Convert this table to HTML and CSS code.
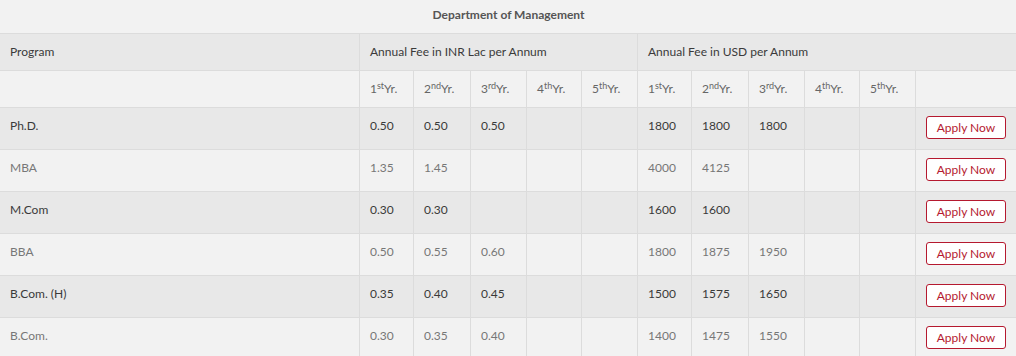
FILE: index.html
```html
<!DOCTYPE html>
<html>
<head>
<meta charset="utf-8">
<link rel="stylesheet" href="styles.css">
</head>
<body>
<table class="fees">
  <colgroup>
    <col class="c-prog">
    <col class="c54"><col class="c57"><col class="c56"><col class="c55"><col class="c56">
    <col class="c54"><col class="c57"><col class="c56"><col class="c55"><col class="c56">
    <col class="c-apply">
  </colgroup>
  <thead>
    <tr class="r-title"><th colspan="12" class="title">Department of Management</th></tr>
    <tr class="r-head">
      <th class="prog">Program</th>
      <th colspan="5">Annual Fee in INR Lac per Annum</th>
      <th colspan="6">Annual Fee in USD per Annum</th>
    </tr>
    <tr class="r-years">
      <th></th>
      <th>1<sup>st</sup>Yr.</th><th>2<sup>nd</sup>Yr.</th><th>3<sup>rd</sup>Yr.</th><th>4<sup>th</sup>Yr.</th><th>5<sup>th</sup>Yr.</th>
      <th>1<sup>st</sup>Yr.</th><th>2<sup>nd</sup>Yr.</th><th>3<sup>rd</sup>Yr.</th><th>4<sup>th</sup>Yr.</th><th>5<sup>th</sup>Yr.</th>
      <th></th>
    </tr>
  </thead>
  <tbody>
    <tr class="dark">
      <td>Ph.D.</td><td>0.50</td><td>0.50</td><td>0.50</td><td></td><td></td>
      <td>1800</td><td>1800</td><td>1800</td><td></td><td></td>
      <td class="act"><a class="apply">Apply Now</a></td>
    </tr>
    <tr class="light">
      <td>MBA</td><td>1.35</td><td>1.45</td><td></td><td></td><td></td>
      <td>4000</td><td>4125</td><td></td><td></td><td></td>
      <td class="act"><a class="apply">Apply Now</a></td>
    </tr>
    <tr class="dark">
      <td>M.Com</td><td>0.30</td><td>0.30</td><td></td><td></td><td></td>
      <td>1600</td><td>1600</td><td></td><td></td><td></td>
      <td class="act"><a class="apply">Apply Now</a></td>
    </tr>
    <tr class="light">
      <td>BBA</td><td>0.50</td><td>0.55</td><td>0.60</td><td></td><td></td>
      <td>1800</td><td>1875</td><td>1950</td><td></td><td></td>
      <td class="act"><a class="apply">Apply Now</a></td>
    </tr>
    <tr class="dark">
      <td>B.Com. (H)</td><td>0.35</td><td>0.40</td><td>0.45</td><td></td><td></td>
      <td>1500</td><td>1575</td><td>1650</td><td></td><td></td>
      <td class="act"><a class="apply">Apply Now</a></td>
    </tr>
    <tr class="light">
      <td>B.Com.</td><td>0.30</td><td>0.35</td><td>0.40</td><td></td><td></td>
      <td>1400</td><td>1475</td><td>1550</td><td></td><td></td>
      <td class="act"><a class="apply">Apply Now</a></td>
    </tr>
  </tbody>
</table>
</body>
</html>
```

FILE: styles.css
```css
html, body {
  margin: 0;
  padding: 0;
  background: #f2f2f2;
  overflow: hidden;
}

.fees {
  font-family: Lato, "Open Sans", sans-serif;
  font-size: 12px;
  line-height: 17px;
  border-collapse: collapse;
  table-layout: fixed;
  width: 1018px;
  margin: -1px 0 0 -1px;
}

.c-prog { width: 360px; }
.c54 { width: 54px; }
.c55 { width: 55px; }
.c56 { width: 56px; }
.c57 { width: 57px; }
.c-apply { width: 102px; }

.fees th,
.fees td {
  border: 1px solid #dcdcdc;
  padding: 9px 10px 0;
  text-align: left;
  vertical-align: top;
  font-weight: 400;
  white-space: nowrap;
}

.r-title th {
  padding-top: 6px;
  height: 27px;
  text-align: center;
  font-weight: 700;
  color: #555;
  background: #f2f2f2;
}

.r-head th {
  height: 27px;
  color: #3a3a3a;
  background: #e8e8e8;
}

.r-years th {
  height: 27px;
  color: #666;
  background: #f2f2f2;
}

.fees sup {
  font-size: 9px;
  line-height: 0;
  vertical-align: 4px;
}

.fees tbody td {
  height: 32px;
}

.dark td {
  background: #e8e8e8;
  color: #3a3a3a;
}

.light td {
  background: #f2f2f2;
  color: #777;
}

.fees td.act {
  padding-top: 8px;
  padding-left: 10px;
}

.apply {
  display: inline-block;
  box-sizing: border-box;
  width: 80px;
  height: 23px;
  line-height: 21px;
  border: 1px solid #b5192f;
  border-radius: 3px;
  background: #fff;
  color: #b5192f;
  text-align: center;
  font-size: 12px;
}
```
